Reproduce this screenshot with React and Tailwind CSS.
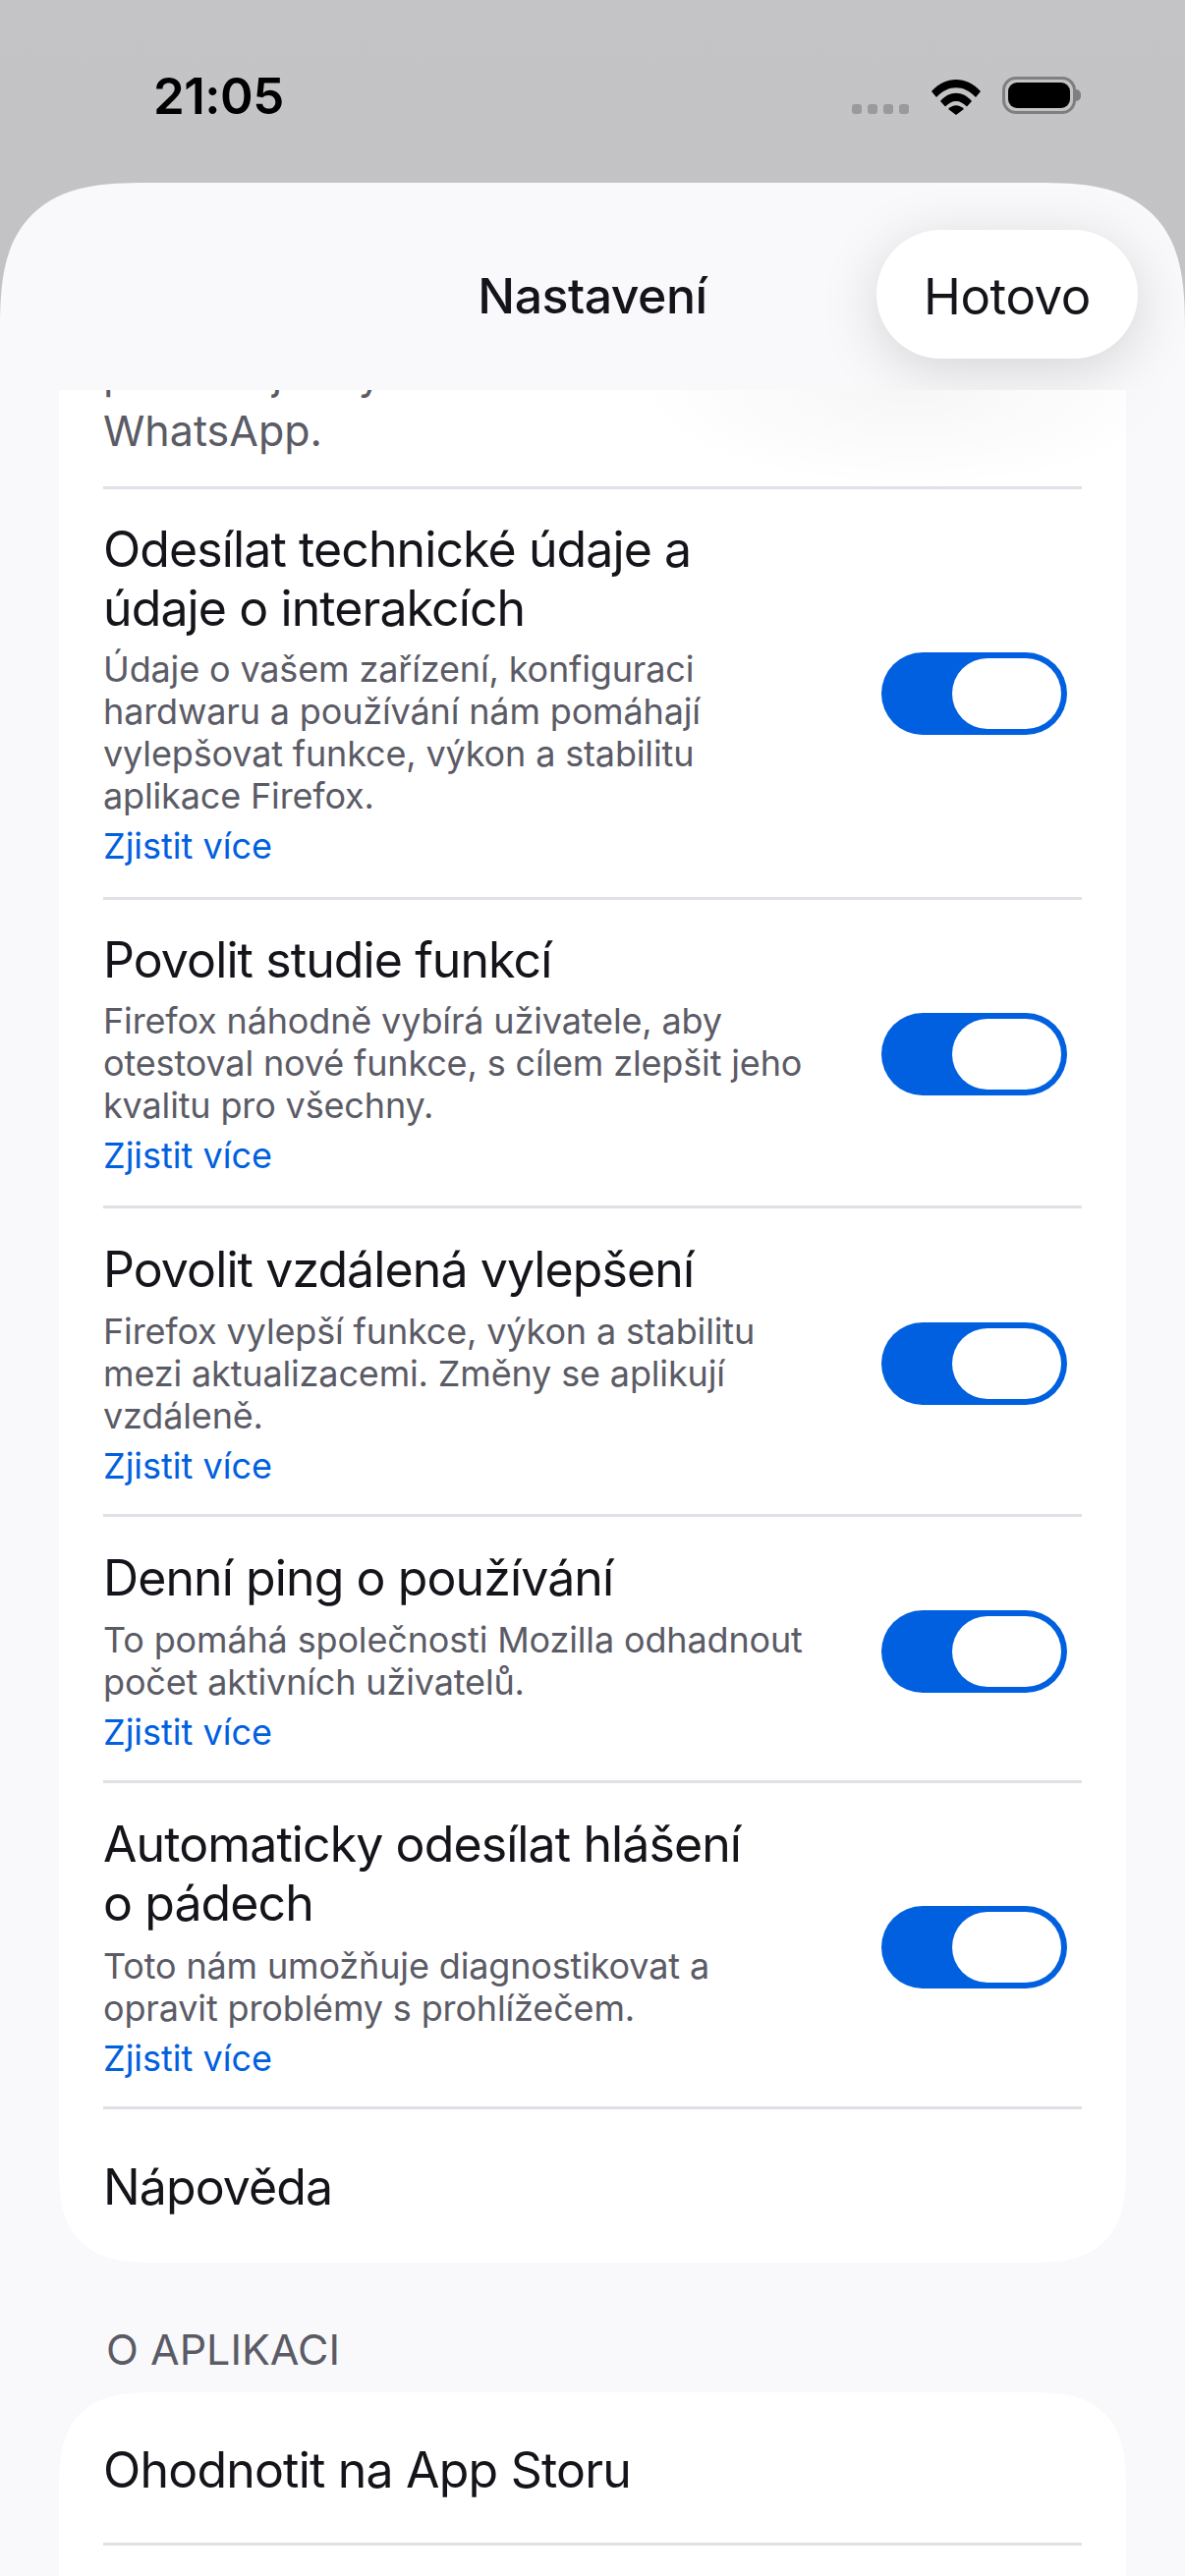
const rows = [
  {
    title: ['Odesílat technické údaje a', 'údaje o interakcích'],
    sub: ['Údaje o vašem zařízení, konfiguraci', 'hardwaru a používání nám pomáhají', 'vylepšovat funkce, výkon a stabilitu', 'aplikace Firefox.'],
    pad: 'pt-[31px] pb-[30px]',
    gap: 'mt-[11px]',
  },
  {
    title: ['Povolit studie funkcí'],
    sub: ['Firefox náhodně vybírá uživatele, aby', 'otestoval nové funkce, s cílem zlepšit jeho', 'kvalitu pro všechny.'],
    pad: 'pt-[31px] pb-[29px]',
    gap: 'mt-[11px]',
  },
  {
    title: ['Povolit vzdálená vylepšení'],
    sub: ['Firefox vylepší funkce, výkon a stabilitu', 'mezi aktualizacemi. Změny se aplikují', 'vzdáleně.'],
    pad: 'pt-[32px] pb-[27px]',
    gap: 'mt-[12px]',
  },
  {
    title: ['Denní ping o používání'],
    sub: ['To pomáhá společnosti Mozilla odhadnout', 'počet aktivních uživatelů.'],
    pad: 'pt-[32px] pb-[27px]',
    gap: 'mt-[12px]',
  },
  {
    title: ['Automaticky odesílat hlášení', 'o pádech'],
    sub: ['Toto nám umožňuje diagnostikovat a', 'opravit problémy s prohlížečem.'],
    pad: 'pt-[32px] pb-[27px]',
    gap: 'mt-[13px]',
  },
];

function Divider() {
  return <div className="h-[3px] mx-[45px] bg-[#e0e0e6]" />;
}

function Toggle() {
  return (
    <div className="w-[189px] h-[84px] shrink-0 rounded-full bg-[#0060df] flex justify-end items-center pr-[6px]">
      <div className="w-[111px] h-[72px] rounded-full bg-white" />
    </div>
  );
}

function ToggleRow({ row }) {
  return (
    <div className={`flex items-center justify-between pl-[45px] pr-[60px] ${row.pad}`}>
      <div>
        <div className="text-[50px] leading-[60px] tracking-[-0.9px] text-[#15141a]">
          {row.title.map((line) => (
            <div key={line}>{line}</div>
          ))}
        </div>
        <div className={`${row.gap} text-[36px] leading-[43px] tracking-[-0.15px] text-[#5b5b66]`}>
          {row.sub.map((line) => (
            <div key={line}>{line}</div>
          ))}
        </div>
        <div className="mt-[8px] text-[36px] leading-[43px] text-[#0060df]">Zjistit více</div>
      </div>
      <Toggle />
    </div>
  );
}

function StatusBar() {
  return (
    <div className="h-[186px] flex justify-between pl-[156px] pr-[106px] pt-[68px]">
      <div className="text-[51px] leading-[60px] font-semibold tracking-[-0.5px] text-black">21:05</div>
      <div className="flex items-start pt-[10px]">
        <div className="flex gap-[6px] mt-[28px] mr-[22px]">
          <div className="w-[10px] h-[10px] rounded-[3px] bg-[#9a9a9c]" />
          <div className="w-[10px] h-[10px] rounded-[3px] bg-[#9a9a9c]" />
          <div className="w-[10px] h-[10px] rounded-[3px] bg-[#9a9a9c]" />
          <div className="w-[10px] h-[10px] rounded-[3px] bg-[#9a9a9c]" />
        </div>
        <svg width="52" height="38" viewBox="0 0 52 38" className="mr-[21px] mt-px">
          <path d="M1 14 C15 -2 37 -2 51 14 L46 20 C34 7 18 7 6 20 Z" fill="#000" />
          <path d="M10 24 C19 13 33 13 42 24 L37 29.500 C30 22 22 22 15 29.500 Z" fill="#000" />
          <path d="M18 32 C23 27 29 27 34 32 L26 38 Z" fill="#000" />
        </svg>
        <div className="w-[75px] h-[38px] rounded-[14px] border-[3px] border-[#7f7f81] p-[3px]">
          <div className="w-full h-full rounded-[9px] bg-black" />
        </div>
        <div className="w-[5px] h-[12px] mt-[13px] rounded-r-full bg-[#7f7f81]" />
      </div>
    </div>
  );
}

export default function App() {
  return (
    <div
      className="w-[1206px] h-[2622px] overflow-hidden bg-gradient-to-b from-[#c4c4c6] to-[#bbbbbd]"
      style={{ fontFamily: 'Inter, "Noto Sans", sans-serif' }}
    >
      <StatusBar />
      <div className="h-[2436px] rounded-t-[150px] [corner-shape:superellipse(1.5)] overflow-hidden bg-[#f9f9fb]">
        <div className="h-[211px] relative flex items-center justify-center overflow-hidden">
          <div className="mt-[20px] text-[50px] font-medium tracking-[-0.5px] text-[#15141a]">Nastavení</div>
          <div className="absolute left-[892px] top-[48px] w-[266px] h-[131px] pt-[6px] rounded-full bg-white flex items-center justify-center text-[51px] tracking-[-0.4px] text-[#15141a] shadow-[0_12px_60px_rgba(0,0,0,0.15)]">
            Hotovo
          </div>
        </div>

        <div className="relative mx-[60px] rounded-b-[100px] [corner-shape:superellipse(1.5)] bg-white">
          <div className="absolute right-[-60px] top-0 w-[560px] h-[100px] bg-[radial-gradient(ellipse_at_top,rgba(0,0,0,0.035),transparent_70%)]" />
          <div className="h-[98px] overflow-hidden flex flex-col justify-end pl-[45px] pb-[28px] text-[43px] leading-[58px] text-[#5b5b66]">
            <div className="whitespace-nowrap">partneři jen ty a</div>
            <div>WhatsApp.</div>
          </div>
          {rows.map((row) => (
            <div key={row.title[0]}>
              <Divider />
              <ToggleRow row={row} />
            </div>
          ))}
          <Divider />
          <div className="h-[156px] pl-[45px] pt-[2px] flex items-center text-[50px] tracking-[-0.9px] text-[#15141a]">Nápověda</div>
        </div>

        <div className="pl-[108px] pt-[63px] pb-[19px] text-[43px] leading-[50px] text-[#5b5b66]">O APLIKACI</div>

        <div className="mx-[60px] rounded-t-[100px] [corner-shape:superellipse(1.5)] bg-white">
          <div className="h-[153px] pl-[45px] pt-[6px] flex items-center text-[50px] tracking-[-0.8px] text-[#15141a]">Ohodnotit na App Storu</div>
          <Divider />
          <div className="h-[100px]" />
        </div>
      </div>
    </div>
  );
}
